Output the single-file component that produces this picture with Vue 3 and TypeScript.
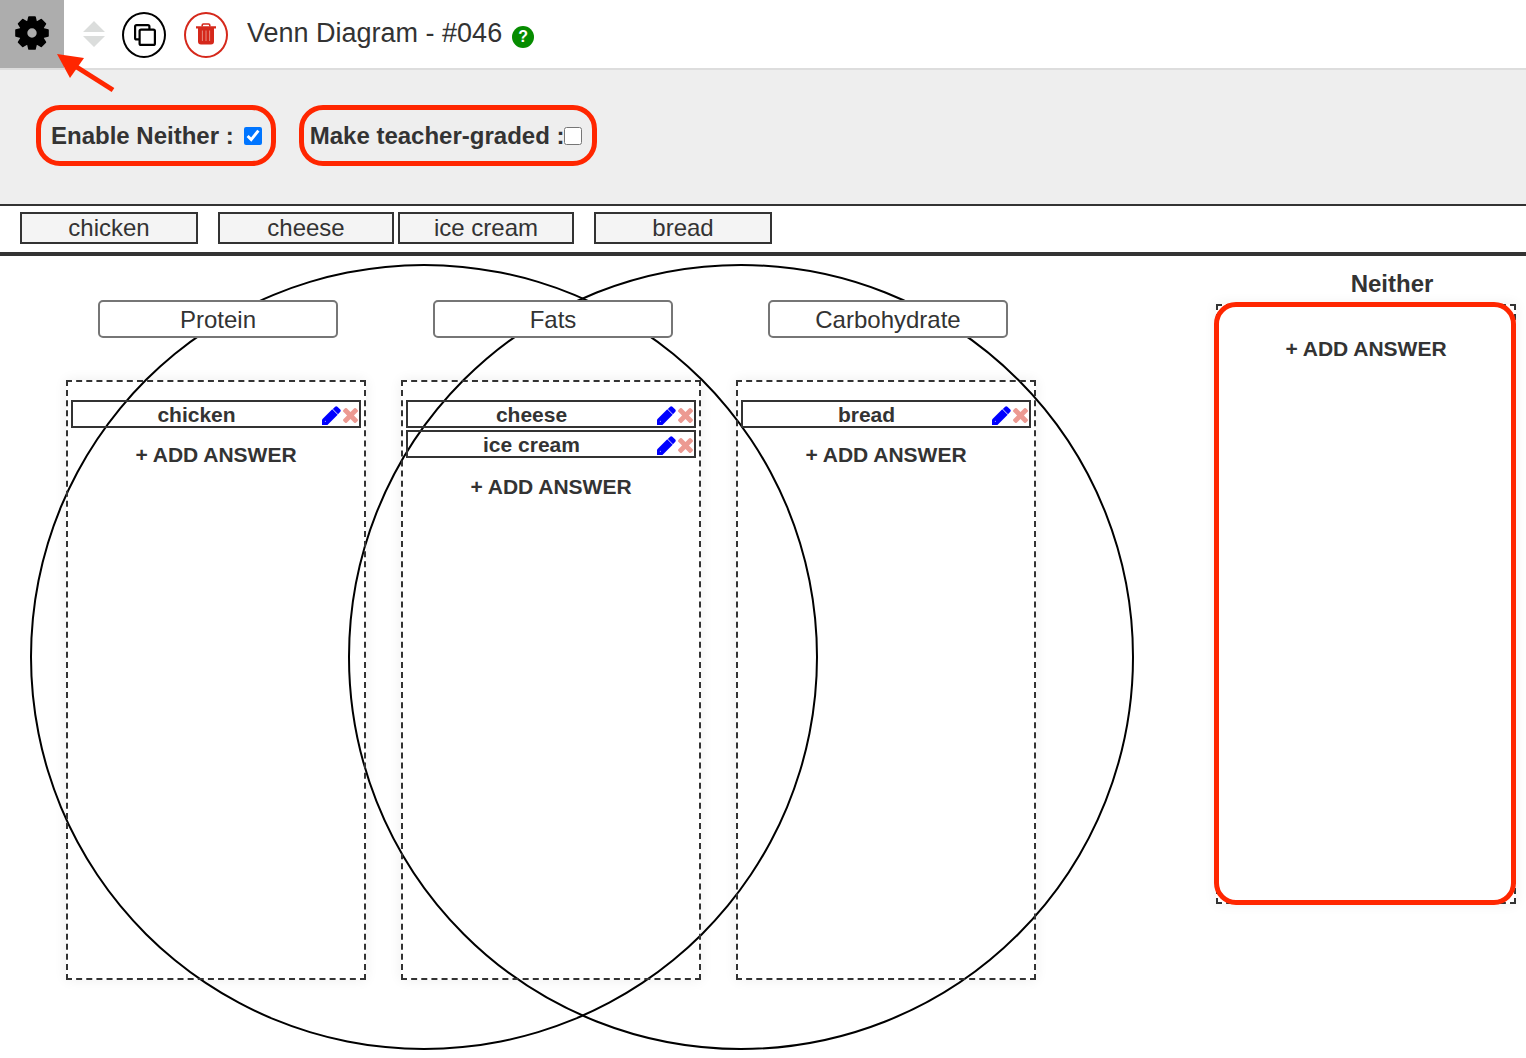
<script setup lang="ts">
import { reactive, ref } from 'vue'

interface Zone {
  id: string
  title: string
  answers: string[]
}

const enableNeither = ref(true)
const teacherGraded = ref(false)

const bank = [
  { text: 'chicken', outer: true },
  { text: 'cheese', outer: false },
  { text: 'ice cream', outer: false },
  { text: 'bread', outer: true },
]

const zones = reactive<Zone[]>([
  { id: 'left', title: 'Protein', answers: ['chicken'] },
  { id: 'both', title: 'Fats', answers: ['cheese', 'ice cream'] },
  { id: 'right', title: 'Carbohydrate', answers: ['bread'] },
])

const teeth = [0, 45, 90, 135, 180, 225, 270, 315]

function removeAnswer(zone: Zone, index: number) {
  zone.answers.splice(index, 1)
}
</script>

<template>
  <main class="editor">
    <header class="toolbar">
      <button class="gear" type="button" aria-label="Settings">
        <svg width="34" height="34" viewBox="-17 -17 34 34">
          <circle r="8.6" fill="none" stroke="#000" stroke-width="7.8" />
          <path
            v-for="angle in teeth"
            :key="angle"
            d="M-4.2-11L-3-16H3L4.2-11z"
            stroke="#000"
            stroke-width="1.6"
            stroke-linejoin="round"
            :transform="`rotate(${angle})`"
          />
        </svg>
      </button>
      <svg class="sorter" width="22" height="28" viewBox="0 0 22 28" aria-hidden="true">
        <path d="M11 1L22 12H0zM0 16H22L11 27z" fill="#dbdddc" />
      </svg>
      <button class="round copy" type="button" aria-label="Duplicate">
        <svg width="22" height="22" viewBox="0 0 22 22" fill="none" stroke="#000" stroke-width="2.2">
          <path d="M5 15.4H2.6Q1.1 15.4 1.1 13.9V2.6Q1.1 1.1 2.6 1.1H13.9Q15.4 1.1 15.4 2.6V5" />
          <rect x="5.6" y="5.6" width="15.3" height="15.3" rx="1.5" />
        </svg>
      </button>
      <button class="round danger" type="button" aria-label="Delete">
        <svg width="20" height="22" viewBox="0 0 20 22">
          <path d="M6.2 3.5V2.2Q6.2 1 7.4 1H12.6Q13.8 1 13.8 2.2V3.5" fill="none" stroke="#d5281b" stroke-width="1.6" />
          <path d="M0 3.2H20V5.6H18V18.4Q18 21.4 15 21.4H5Q2 21.4 2 18.4V5.6H0z" fill="#d5281b" />
          <path d="M6.4 7.5V18M10 7.5V18M13.6 7.5V18" stroke="#eba49d" stroke-width="0.8" />
        </svg>
      </button>
      <h1>Venn Diagram - #046</h1>
      <button class="help" type="button" aria-label="Help">?</button>
      <svg class="pointer" width="60" height="42" viewBox="0 0 60 42" aria-hidden="true">
        <path d="M1 1L28 5L14 25z" fill="#ff2600" />
        <path d="M19 13L57 37" stroke="#ff2600" stroke-width="5" />
      </svg>
    </header>

    <section class="settings">
      <label class="option spaced">
        <span>Enable Neither :</span>
        <input v-model="enableNeither" type="checkbox" />
      </label>
      <label class="option">
        <span>Make teacher-graded :</span>
        <input v-model="teacherGraded" type="checkbox" />
      </label>
    </section>

    <ul class="bank">
      <li v-for="item in bank" :key="item.text" :class="{ outer: item.outer }">{{ item.text }}</li>
    </ul>

    <section class="board">
      <div class="circle first"></div>
      <div class="circle second"></div>
      <div class="columns">
        <div v-for="zone in zones" :key="zone.id" class="column">
          <input v-model="zone.title" class="title" type="text" aria-label="Category name" />
          <div class="zone">
            <div v-for="(answer, i) in zone.answers" :key="answer" class="answer">
              <span>{{ answer }}</span>
              <button type="button" aria-label="Edit">
                <svg width="19" height="19" viewBox="128 128 1536 1536">
                  <path d="M955 396l441 441-827 827h-441v-441z" fill="#00f" />
                  <path d="M1643 512q0 53-37 90l-186 186-416-416 186-185q36-38 90-38 53 0 91 38l235 234q37 39 37 91z" fill="#00f" />
                  <circle cx="400" cy="1370" r="45" fill="#b8b8ff" />
                </svg>
              </button>
              <button type="button" aria-label="Remove" @click="removeAnswer(zone, i)">
                <svg width="15" height="15" viewBox="302 366 1188 1188">
                  <path
                    d="M1490 1322q0 40-28 68l-136 136q-28 28-68 28t-68-28l-294-294-294 294q-28 28-68 28t-68-28l-136-136q-28-28-28-68t28-68l294-294-294-294q-28-28-28-68t28-68l136-136q28-28 68-28t68 28l294 294 294-294q28-28 68-28t68 28l136 136q28 28 28 68t-28 68l-294 294 294 294q28 28 28 68z"
                    fill="#ec9a92"
                  />
                </svg>
              </button>
            </div>
            <button class="add" type="button">+ ADD ANSWER</button>
          </div>
        </div>
      </div>
      <div v-if="enableNeither" class="neither">
        <h2>Neither</h2>
        <div class="zone">
          <button class="add" type="button">+ ADD ANSWER</button>
          <div class="highlight"></div>
        </div>
      </div>
    </section>
  </main>
</template>

<style>
body {
  margin: 0;
  background: #fff;
}
</style>

<style scoped>
.editor {
  color: #333;
  font-family: "Liberation Sans", Arial, sans-serif;
  font-size: 24px;
  overflow: hidden;
}
.editor * {
  box-sizing: border-box;
}
button {
  padding: 0;
  border: 0;
  background: none;
  color: inherit;
  font: inherit;
  cursor: pointer;
}
svg {
  display: block;
}
.toolbar {
  position: relative;
  display: flex;
  align-items: center;
  height: 70px;
  border-bottom: 2px solid #ddd;
}
.gear {
  display: flex;
  align-items: center;
  justify-content: center;
  width: 64px;
  height: 68px;
  padding-bottom: 2px;
  background: #adadad;
}
.sorter {
  margin: 0 17px 0 19px;
}
.round {
  display: flex;
  align-items: center;
  justify-content: center;
  width: 44px;
  height: 46px;
  margin-top: 2px;
  margin-right: 18px;
  border: 2px solid #000;
  border-radius: 50%;
}
.round.copy {
  padding-left: 2px;
}
.round.danger {
  border-color: #d5281b;
  padding-bottom: 2px;
}
h1 {
  margin: 0 10px 2px 1px;
  font-size: 27px;
  font-weight: 400;
  line-height: 32px;
}
.help {
  width: 22px;
  height: 22px;
  margin-top: 6px;
  border-radius: 50%;
  background: #068c00;
  color: #fff;
  font-size: 16px;
  font-weight: 700;
  line-height: 22px;
}
.pointer {
  position: absolute;
  top: 53px;
  left: 56px;
}
.settings {
  display: flex;
  gap: 23px;
  align-items: flex-start;
  height: 136px;
  padding: 35px 36px 0;
  border-bottom: 2px solid #333;
  background: #eee;
}
.option {
  display: flex;
  align-items: center;
  height: 61px;
  padding: 0 10px 0 6px;
  border: 5px solid #ff2600;
  border-radius: 24px;
  font-weight: 700;
}
.option.spaced {
  gap: 10px;
  padding: 0 9px 0 10px;
}
.option input {
  width: 18px;
  height: 18px;
  margin: 0;
}
.bank {
  display: flex;
  margin: 0;
  padding: 6px 20px 8px;
  border-bottom: 4px solid #333;
  list-style: none;
}
.bank li {
  width: 176px;
  height: 32px;
  border: 2px solid #333;
  background: #f4f4f4;
  line-height: 28px;
  text-align: center;
}
.bank li + li {
  margin-left: 4px;
}
.bank .outer {
  width: 178px;
}
.bank .outer + li,
.bank li + .outer {
  margin-left: 20px;
}
.board {
  position: relative;
  display: flex;
  justify-content: space-between;
  padding: 44px 10px 78px 66px;
}
.circle {
  position: absolute;
  top: 8px;
  left: 30px;
  width: 788px;
  height: 786px;
  border: 2px solid #000;
  border-radius: 50%;
}
.circle.second {
  left: 348px;
  width: 786px;
}
.columns {
  display: flex;
  gap: 35px;
}
.column {
  width: 300px;
}
.title {
  position: relative;
  display: block;
  width: 240px;
  height: 38px;
  margin: 0 0 42px 32px;
  padding: 2px 0 0;
  border: 2px solid #767676;
  border-radius: 5px;
  background: #fff;
  color: inherit;
  font: inherit;
  text-align: center;
}
.zone {
  position: relative;
  display: flex;
  flex-direction: column;
  height: 600px;
  padding: 18px 3px 0;
  border: 2px dashed #333;
  box-shadow: 0 0 12px rgba(0, 0, 0, 0.07);
  font-size: 21px;
  font-weight: 700;
}
.answer {
  display: flex;
  gap: 2px;
  align-items: center;
  width: 290px;
  height: 28px;
  margin-bottom: 2px;
  padding-right: 1px;
  border: 2px solid #333;
  line-height: 24px;
}
.answer + .answer {
  margin-bottom: 4px;
}
.answer span {
  flex: 1;
  padding-top: 2px;
  text-align: center;
}
.answer button {
  padding-top: 2px;
}
.add {
  margin: 13px auto 0;
  line-height: 24px;
}
.neither {
  width: 300px;
}
.neither h2 {
  margin: -30px 0 6px;
  padding-left: 52px;
  font-size: 24px;
  line-height: 28px;
  text-align: center;
}
.highlight {
  position: absolute;
  inset: -4px -2px -3px -4px;
  border: 5px solid #ff2600;
  border-radius: 22px;
  pointer-events: none;
}
</style>
